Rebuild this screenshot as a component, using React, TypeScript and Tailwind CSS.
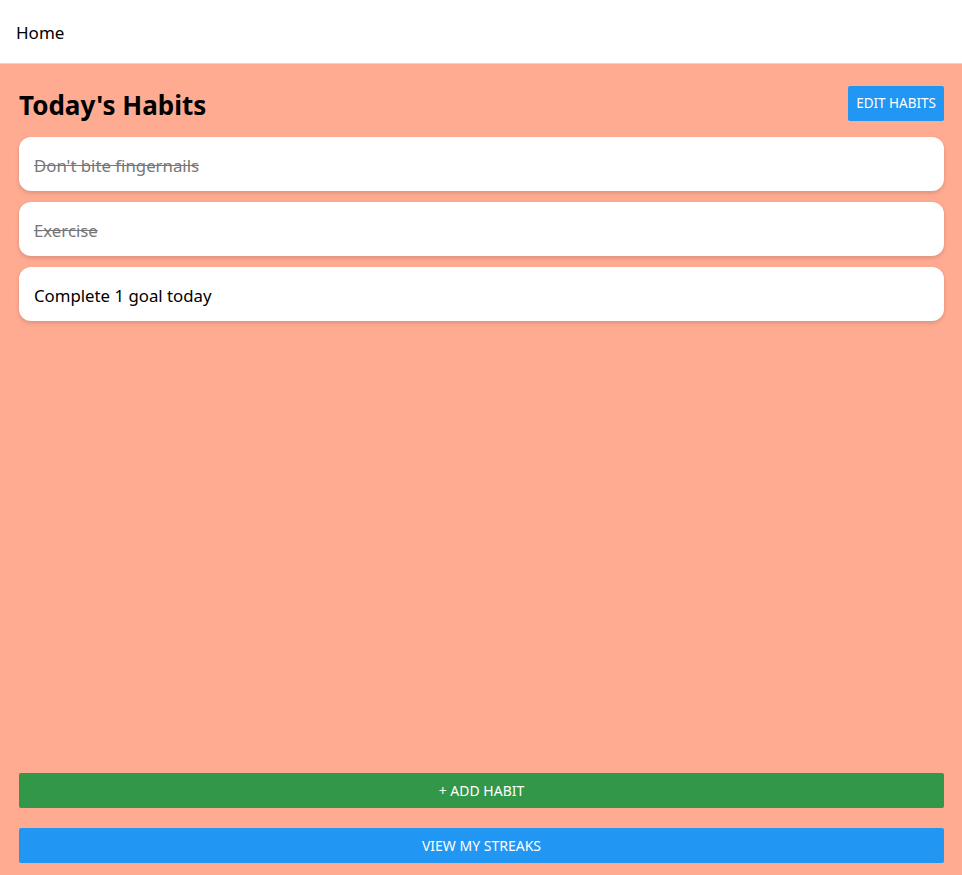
import React from "react";

const habits = [
  { name: "Don't bite fingernails", done: true },
  { name: "Exercise", done: true },
  { name: "Complete 1 goal today", done: false },
];

export default function App() {
  return (
    <div
      className="flex h-[875px] flex-col bg-[#ffab91]"
      style={{ fontFamily: '"Noto Sans", "Open Sans", sans-serif' }}
    >
      <header className="flex h-[64px] shrink-0 items-center border-b border-[#d9d9d9] bg-white px-4 pt-[2px]">
        <span className="text-[17px] text-black">Home</span>
      </header>
      <main className="flex flex-1 flex-col pb-[12px] pl-[19px] pr-[18px]">
        <div className="mt-[22px] flex items-start justify-between">
          <h1 className="pt-[2px] text-[26px] font-bold leading-[35px] text-black">Today's Habits</h1>
          <button className="h-[35px] rounded-[2px] bg-[#2196f3] px-2 text-[13.5px] font-normal text-white">
            EDIT HABITS
          </button>
        </div>
        <div className="mt-[14px] flex flex-col gap-[11px]">
          {habits.map((h) => (
            <div
              key={h.name}
              className="flex h-[54px] items-center rounded-[12px] bg-white px-[15px] pt-[4px] shadow-[0_2px_4px_rgba(0,0,0,0.15)]"
            >
              <span
                className={
                  h.done
                    ? "text-[16.8px] text-[#777] line-through"
                    : "text-[16.8px] text-black"
                }
              >
                {h.name}
              </span>
            </div>
          ))}
        </div>
        <div className="mt-auto flex flex-col gap-[20px]">
          <button className="h-[35px] w-full rounded-[2px] bg-[#33974a] text-[14px] font-normal text-white">
            + ADD HABIT
          </button>
          <button className="h-[35px] w-full rounded-[2px] bg-[#2196f3] text-[14px] font-normal text-white">
            VIEW MY STREAKS
          </button>
        </div>
      </main>
    </div>
  );
}
